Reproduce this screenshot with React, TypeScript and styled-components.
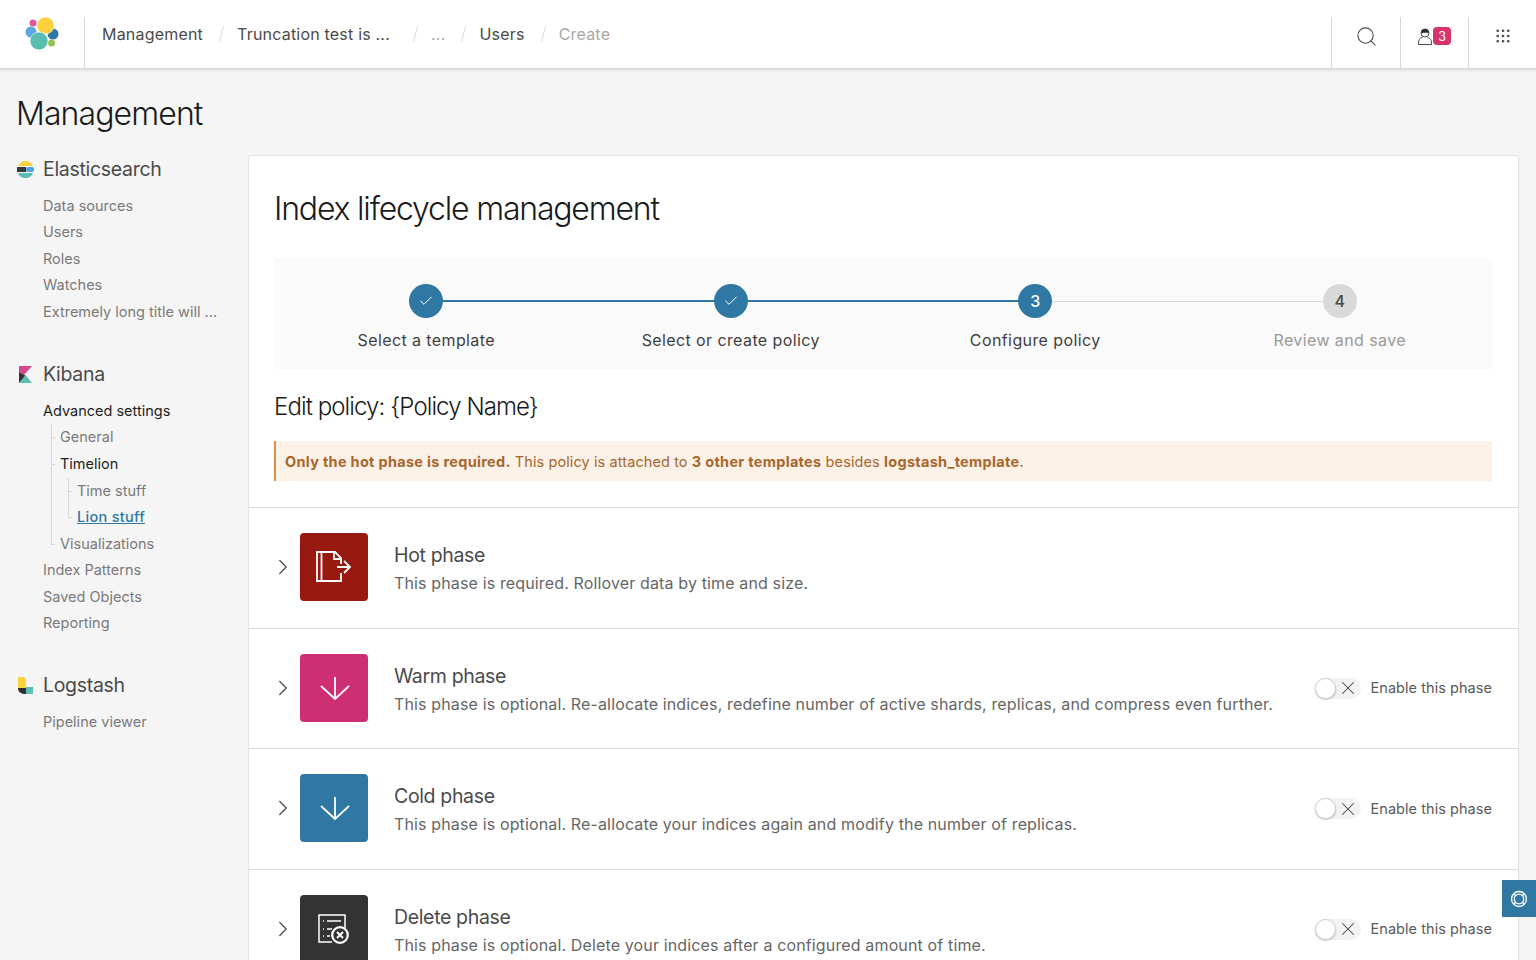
import React from "react";
import styled, { createGlobalStyle } from "styled-components";
import { ChevronRight, Check, X, Search, Grip } from "lucide-react";

const GlobalStyle = createGlobalStyle`
  html, body {
    margin: 0;
    height: 960px;
    overflow: hidden;
    background: #f5f5f5;
    font-family: Inter, "Liberation Sans", sans-serif;
    color: #3f3f3f;
  }
  * { box-sizing: border-box; }
`;

const Header = styled.header`
  display: flex;
  align-items: stretch;
  height: 69px;
  background: #fff;
  border-bottom: 1px solid #d9d9d9;
  box-shadow: 0 1px 3px rgba(0, 0, 0, 0.12);
`;

const LogoCell = styled.div`
  display: flex;
  align-items: center;
  justify-content: center;
  width: 85px;
  height: 51px;
  margin-top: 17px;
  padding: 0 0 17px 2px;
  border-right: 1px solid #d9d9d9;
`;

const Crumbs = styled.nav`
  display: flex;
  flex: 1;
  align-items: center;
  height: 68px;
  padding-left: 17px;
  font-size: 16px;
  letter-spacing: 0.2px;
`;

const Crumb = styled.span<{ $muted?: boolean; $width?: number }>`
  color: ${(p) => (p.$muted ? "#a9a9a9" : "#4a4a4a")};
  ${(p) => p.$width && `width: ${p.$width}px;`}
  white-space: nowrap;
`;

const Slash = styled.span`
  width: 1px;
  height: 16px;
  margin: 0 15px 0 18px;
  background: #d9d9d9;
  transform: rotate(15deg);
`;

const HeaderCell = styled.div<{ $wide?: boolean }>`
  display: flex;
  align-items: center;
  justify-content: center;
  width: ${(p) => (p.$wide ? 69 : 68)}px;
  height: 51px;
  margin-top: 17px;
  padding-bottom: 13px;
  border-left: 1px solid #d9d9d9;
  color: #4a4a4a;
`;

const Badge = styled.span`
  display: flex;
  align-items: center;
  justify-content: center;
  width: 18px;
  height: 18px;
  margin-left: 1px;
  border-radius: 4px;
  background: #d6336c;
  color: #fff;
  font-size: 12.5px;
`;

const Page = styled.main`
  padding: 0 17px;
`;

const PageTitle = styled.h1`
  margin: 0 0 0 -1px;
  padding-top: 25px;
  height: 86px;
  font-size: 32px;
  line-height: 40px;
  font-weight: 300;
  letter-spacing: -0.9px;
  color: #1a1a1a;
`;

const Body = styled.div`
  display: flex;
`;

const Sidebar = styled.aside`
  flex: 0 0 231px;
`;

const NavGroup = styled.section`
  margin-bottom: 34.400px;
`;

const GroupHead = styled.div`
  display: flex;
  align-items: center;
  gap: 9px;
  height: 28px;
  margin-bottom: 9.700px;
  font-size: 19.5px;
  letter-spacing: -0.3px;
  color: #4a4a4a;
`;

const NavList = styled.ul<{ $nested?: boolean }>`
  position: relative;
  margin: 0;
  padding: 0 0 0 ${(p) => (p.$nested ? 9 : 26)}px;
  list-style: none;
  ${(p) => p.$nested && `margin-left: 8px;`}
  ${(p) =>
    p.$nested &&
    `&::before {
      content: "";
      position: absolute;
      left: 0;
      top: 0;
      bottom: 13px;
      width: 1px;
      background: #d9d9d9;
    }`}
`;

const NavItem = styled.li<{ $nested?: boolean }>`
  position: relative;
  ${(p) =>
    p.$nested &&
    `&::before {
      content: "";
      position: absolute;
      left: -9px;
      top: 13px;
      width: 4px;
      height: 1px;
      background: #d9d9d9;
    }`}
`;

const NavLabel = styled.div<{ $tone?: "active" | "link" }>`
  height: 26.6px;
  line-height: 26.6px;
  font-size: 14.5px;
  white-space: nowrap;
  color: ${(p) => (p.$tone === "active" ? "#1f1f1f" : p.$tone === "link" ? "#2f78a3" : "#7a7a7a")};
  ${(p) => p.$tone === "link" && "text-decoration: underline; font-weight: 500; letter-spacing: 0.3px;"}
`;

const Panel = styled.section`
  flex: 1;
  height: 900px;
  padding-top: 26px;
  background: #fff;
  border: 1px solid #e4e4e4;
  border-radius: 4px;
  box-shadow: 0 1px 2px rgba(0, 0, 0, 0.06);
`;

const PanelTop = styled.div`
  padding: 0 26px 0 25px;
`;

const PanelTitle = styled.h2`
  margin: 0 0 28px;
  height: 48px;
  font-size: 32px;
  line-height: 54px;
  font-weight: 300;
  letter-spacing: -1.2px;
  color: #1a1a1a;
`;

const Steps = styled.div`
  display: grid;
  grid-template-columns: repeat(4, 1fr);
  height: 111px;
  padding-top: 26px;
  background: #fafafa;
`;

const Step = styled.div`
  position: relative;
  display: flex;
  flex-direction: column;
  align-items: center;
`;

const StepLine = styled.span<{ $done: boolean }>`
  position: absolute;
  top: ${(p) => (p.$done ? 16 : 16.5)}px;
  left: 50%;
  width: 100%;
  height: ${(p) => (p.$done ? 2 : 1)}px;
  background: ${(p) => (p.$done ? "#2f78a3" : "#d9d9d9")};
`;

const StepDot = styled.span<{ $todo?: boolean }>`
  position: relative;
  z-index: 1;
  display: flex;
  align-items: center;
  justify-content: center;
  width: 34px;
  height: 34px;
  border-radius: 50%;
  background: ${(p) => (p.$todo ? "#d9d9d9" : "#2f78a3")};
  color: ${(p) => (p.$todo ? "#4a4a4a" : "#fff")};
  font-size: 16px;
  font-weight: 500;
`;

const StepLabel = styled.span<{ $todo?: boolean }>`
  margin-top: 9px;
  line-height: 26px;
  font-size: 16px;
  letter-spacing: 0.4px;
  color: ${(p) => (p.$todo ? "#999" : "#3f3f3f")};
`;

const SubTitle = styled.h3`
  margin: 0;
  height: 72px;
  padding-top: 21px;
  font-size: 24px;
  line-height: 34px;
  font-weight: 300;
  letter-spacing: -0.9px;
  color: #1a1a1a;
`;

const Callout = styled.div`
  height: 40px;
  margin-bottom: 26px;
  padding: 0 9px;
  line-height: 42px;
  font-size: 14.5px;
  letter-spacing: 0.1px;
  color: #a8662c;
  background: #fbf1e7;
  border-left: 2px solid #e08f4a;

  b {
    letter-spacing: 0.3px;
  }
`;

const PhaseRow = styled.div`
  display: flex;
  align-items: center;
  height: 120.5px;
  padding: 0 26px 1px 26px;
  border-top: 1px solid #dcdcdc;
`;

const RowChevron = styled(ChevronRight)`
  flex: 0 0 auto;
  margin-left: -5px;
  color: #4a4a4a;
`;

const PhaseIcon = styled.div<{ $color: string }>`
  display: flex;
  flex: 0 0 68px;
  align-items: center;
  justify-content: center;
  width: 68px;
  height: 68px;
  margin: 0 26px 0 4px;
  border-radius: 4px;
  background: ${(p) => p.$color};
  color: #fff;
`;

const PhaseText = styled.div`
  flex: 1;
  padding-top: 5px;
`;

const PhaseTitle = styled.div`
  font-size: 19.5px;
  line-height: 27px;
  letter-spacing: -0.35px;
  color: #4a4a4a;
`;

const PhaseDesc = styled.div`
  font-size: 16px;
  line-height: 28px;
  letter-spacing: 0.14px;
  color: #666;
`;

const Toggle = styled.span`
  position: relative;
  display: flex;
  align-items: center;
  justify-content: flex-end;
  width: 46px;
  height: 21px;
  margin: 1px 10px 0 0;
  padding-right: 2px;
  border-radius: 11px;
  background: #f2f2f2;
  color: #4a4a4a;
`;

const ToggleKnob = styled.span`
  position: absolute;
  left: 0;
  top: 0;
  width: 21px;
  height: 21px;
  border-radius: 50%;
  background: #fff;
  border: 1px solid #cfcfcf;
  box-shadow: 0 1px 2px rgba(0, 0, 0, 0.2);
`;

const ToggleLabel = styled.span`
  font-size: 14.5px;
  letter-spacing: 0.05px;
  color: #5a5a5a;
`;

const SupportButton = styled.button`
  position: fixed;
  right: 0;
  top: 880px;
  display: flex;
  align-items: center;
  justify-content: center;
  width: 34px;
  height: 37px;
  padding: 0;
  border: none;
  background: #2f78a3;
  color: #fff;
`;

const Logo = () => (
  <svg width="36" height="34" viewBox="0 0 36 34">
    <circle cx="8" cy="6" r="3.500" fill="#e6539c" />
    <circle cx="6" cy="15" r="5.500" fill="#5ba8e0" />
    <circle cx="28" cy="17" r="5.500" fill="#2f78a3" />
    <circle cx="26.500" cy="26" r="3.500" fill="#93c452" />
    <circle cx="20.500" cy="8.500" r="8.500" fill="#fdd13b" stroke="#fff" strokeWidth="0.6" />
    <circle cx="14" cy="24" r="9" fill="#5bbcb1" stroke="#fff" strokeWidth="0.6" />
  </svg>
);

const ElasticIcon = () => (
  <svg width="17" height="17" viewBox="0 0 17 17">
    <path d="M1 5C2 2 5 0 8.500 0S15 2 16 5z" fill="#fdd13b" />
    <rect x="0" y="6" width="9" height="5" fill="#3a3a3a" />
    <rect x="9" y="6" width="8" height="5" rx="2" fill="#4aa3df" />
    <path d="M1 12h15c-1 3-4 5-7.500 5S2 15 1 12z" fill="#5bbcb1" />
  </svg>
);

const KibanaIcon = () => (
  <svg width="17" height="17" viewBox="0 0 17 17">
    <path d="M2 0h13L7 9 2 6z" fill="#d6498f" />
    <path d="M2 6l7 4-7 7z" fill="#333" />
    <path d="M2 17h13L8.500 9z" fill="#5bbcb1" />
  </svg>
);

const LogstashIcon = () => (
  <svg width="17" height="17" viewBox="0 0 17 17">
    <path d="M1 0h5c2 0 3 2 3 4v7H1z" fill="#fdd13b" />
    <path d="M1 11h8v6C4 17 1 15 1 11z" fill="#2e2e2e" />
    <rect x="9" y="10" width="7" height="7" fill="#5bbcb1" />
  </svg>
);

const UserIcon = () => (
  <svg width="14" height="17" viewBox="0 0 14 17" fill="none" stroke="#4a4a4a">
    <circle cx="7" cy="5" r="4" />
    <path d="M3 5c2 0 6-.5 8 0-.5-5.500-7.500-5.500-8 0z" fill="#2e2e2e" stroke="none" />
    <path d="M4.500 9.500C1.500 10 .5 12 .5 15v1.500h13V15c0-3-1-5-4-5.500" />
  </svg>
);

const SupportIcon = () => (
  <svg width="18" height="18" viewBox="0 0 18 18" fill="none" stroke="currentColor" strokeWidth="1.300">
    <circle cx="9" cy="9" r="7.500" />
    <circle cx="9" cy="9" r="4.800" />
    <path d="M3.700 3.700l2 2M14.300 3.700l-2 2M3.700 14.300l2-2M14.300 14.300l-2-2" />
  </svg>
);

const HotIcon = () => (
  <svg width="36" height="32" viewBox="0 0 36 32" fill="none" stroke="currentColor" strokeWidth="1.800">
    <path d="M25 22v8H1V1h18l6 6v6" />
    <path d="M5.500 1v29" />
    <path d="M18 1v7h7" />
    <path d="M21 16h13M28 10l6 6-6 6" />
  </svg>
);

const DownIcon = () => (
  <svg width="32" height="26" viewBox="0 0 32 26" fill="none" stroke="currentColor" strokeWidth="1.800">
    <path d="M17 2v22M3 11l14 13 14-13" />
  </svg>
);

const DeleteIcon = () => (
  <svg width="32" height="30" viewBox="0 0 32 30" fill="none" stroke="currentColor" strokeWidth="1.500">
    <path d="M14 28H1V1h26v13" />
    <path d="M5 7h1M9 7h14" />
    <path d="M5 15h1M9 15h5" />
    <path d="M5 22h1M9 22h3" />
    <circle cx="22" cy="21" r="7.800" strokeWidth="2.200" />
    <path d="M19 18l6 6M25 18l-6 6" strokeWidth="2" />
  </svg>
);

const steps = [
  { label: "Select a template", done: true },
  { label: "Select or create policy", done: true },
  { label: "Configure policy", num: 3 },
  { label: "Review and save", num: 4, todo: true },
];

const phases = [
  {
    title: "Hot phase",
    desc: "This phase is required. Rollover data by time and size.",
    color: "#98190f",
    icon: <HotIcon />,
    required: true,
  },
  {
    title: "Warm phase",
    desc: "This phase is optional. Re-allocate indices, redefine number of active shards, replicas, and compress even further.",
    color: "#ce2f72",
    icon: <DownIcon />,
  },
  {
    title: "Cold phase",
    desc: "This phase is optional. Re-allocate your indices again and modify the number of replicas.",
    color: "#2f78a3",
    icon: <DownIcon />,
  },
  {
    title: "Delete phase",
    desc: "This phase is optional. Delete your indices after a configured amount of time.",
    color: "#333333",
    icon: <DeleteIcon />,
  },
];

export default function App() {
  return (
    <>
      <GlobalStyle />
      <Header>
        <LogoCell>
          <Logo />
        </LogoCell>
        <Crumbs>
          <Crumb>Management</Crumb>
          <Slash />
          <Crumb $width={160}>Truncation test is ...</Crumb>
          <Slash />
          <Crumb $muted>...</Crumb>
          <Slash />
          <Crumb>Users</Crumb>
          <Slash />
          <Crumb $muted>Create</Crumb>
        </Crumbs>
        <HeaderCell $wide>
          <Search size={23} strokeWidth={1.1} />
        </HeaderCell>
        <HeaderCell>
          <UserIcon />
          <Badge>3</Badge>
        </HeaderCell>
        <HeaderCell>
          <Grip size={18} strokeWidth={1.6} />
        </HeaderCell>
      </Header>
      <Page>
        <PageTitle>Management</PageTitle>
        <Body>
          <Sidebar>
            <NavGroup>
              <GroupHead>
                <ElasticIcon />
                Elasticsearch
              </GroupHead>
              <NavList>
                <NavItem><NavLabel>Data sources</NavLabel></NavItem>
                <NavItem><NavLabel>Users</NavLabel></NavItem>
                <NavItem><NavLabel>Roles</NavLabel></NavItem>
                <NavItem><NavLabel>Watches</NavLabel></NavItem>
                <NavItem><NavLabel>Extremely long title will ...</NavLabel></NavItem>
              </NavList>
            </NavGroup>
            <NavGroup>
              <GroupHead>
                <KibanaIcon />
                Kibana
              </GroupHead>
              <NavList>
                <NavItem>
                  <NavLabel $tone="active">Advanced settings</NavLabel>
                  <NavList $nested>
                    <NavItem $nested><NavLabel>General</NavLabel></NavItem>
                    <NavItem $nested>
                      <NavLabel $tone="active">Timelion</NavLabel>
                      <NavList $nested>
                        <NavItem $nested><NavLabel>Time stuff</NavLabel></NavItem>
                        <NavItem $nested><NavLabel $tone="link">Lion stuff</NavLabel></NavItem>
                      </NavList>
                    </NavItem>
                    <NavItem $nested><NavLabel>Visualizations</NavLabel></NavItem>
                  </NavList>
                </NavItem>
                <NavItem><NavLabel>Index Patterns</NavLabel></NavItem>
                <NavItem><NavLabel>Saved Objects</NavLabel></NavItem>
                <NavItem><NavLabel>Reporting</NavLabel></NavItem>
              </NavList>
            </NavGroup>
            <NavGroup>
              <GroupHead>
                <LogstashIcon />
                Logstash
              </GroupHead>
              <NavList>
                <NavItem><NavLabel>Pipeline viewer</NavLabel></NavItem>
              </NavList>
            </NavGroup>
          </Sidebar>
          <Panel>
            <PanelTop>
              <PanelTitle>Index lifecycle management</PanelTitle>
              <Steps>
                {steps.map((s, i) => (
                  <Step key={s.label}>
                    {i < 3 && <StepLine $done={i < 2} />}
                    <StepDot $todo={s.todo}>
                      {s.done ? <Check size={16} strokeWidth={1.5} /> : s.num}
                    </StepDot>
                    <StepLabel $todo={s.todo}>{s.label}</StepLabel>
                  </Step>
                ))}
              </Steps>
              <SubTitle>Edit policy: {"{Policy Name}"}</SubTitle>
              <Callout>
                <b>Only the hot phase is required.</b> This policy is attached to <b>3 other templates</b> besides{" "}
                <b>logstash_template</b>.
              </Callout>
            </PanelTop>
            {phases.map((p) => (
              <PhaseRow key={p.title}>
                <RowChevron size={26} strokeWidth={1.1} />
                <PhaseIcon $color={p.color}>{p.icon}</PhaseIcon>
                <PhaseText>
                  <PhaseTitle>{p.title}</PhaseTitle>
                  <PhaseDesc>{p.desc}</PhaseDesc>
                </PhaseText>
                {!p.required && (
                  <>
                    <Toggle>
                      <ToggleKnob />
                      <X size={22} strokeWidth={1.1} />
                    </Toggle>
                    <ToggleLabel>Enable this phase</ToggleLabel>
                  </>
                )}
              </PhaseRow>
            ))}
          </Panel>
        </Body>
      </Page>
      <SupportButton>
        <SupportIcon />
      </SupportButton>
    </>
  );
}
